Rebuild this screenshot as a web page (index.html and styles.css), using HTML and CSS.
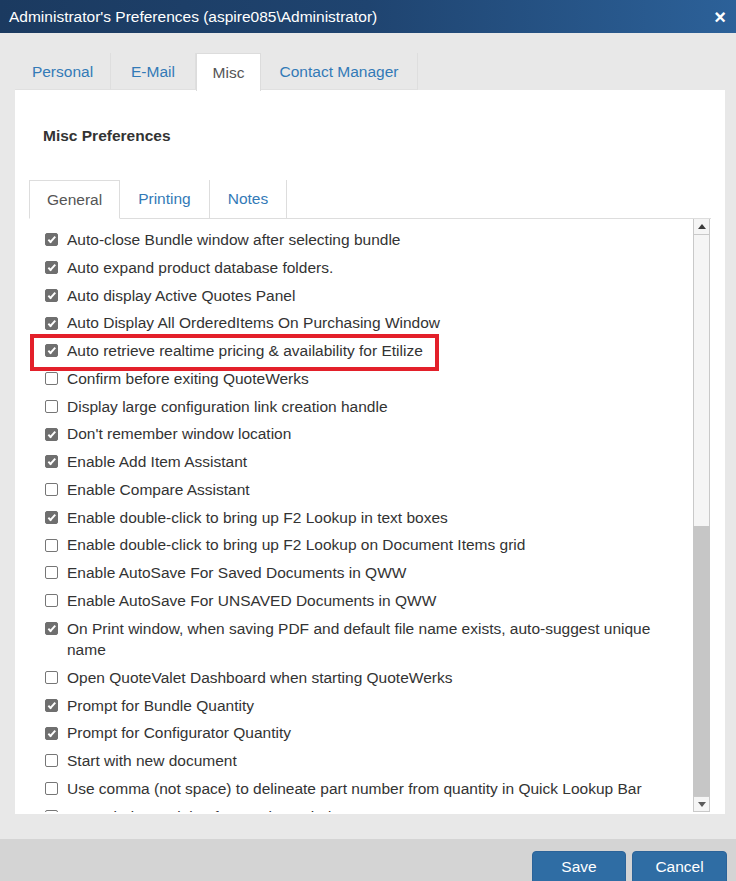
FILE: index.html
```html
<!DOCTYPE html>
<html>
<head>
<meta charset="utf-8">
<link rel="stylesheet" href="styles.css">
</head>
<body>
<div class="dialog">
  <div class="titlebar">
    <span class="title">Administrator's Preferences (aspire085\Administrator)</span>
    <span class="close">×</span>
  </div>
  <div class="body">
    <div class="tabs">
      <div class="tab t-personal">Personal</div>
      <div class="tab t-email">E-Mail</div>
      <div class="tab t-misc active">Misc</div>
      <div class="tab t-contact">Contact Manager</div>
    </div>
    <div class="panel">
      <div class="heading">Misc Preferences</div>
      <div class="subtabs">
        <div class="subtab active">General</div>
        <div class="subtab">Printing</div>
        <div class="subtab">Notes</div>
        <div class="subtab-fill"></div>
      </div>
      <div class="listwrap">
        <div class="items">
          <div class="row"><span class="cb on"></span><span class="lbl">Auto-close Bundle window after selecting bundle</span></div>
          <div class="row"><span class="cb on"></span><span class="lbl">Auto expand product database folders.</span></div>
          <div class="row"><span class="cb on"></span><span class="lbl">Auto display Active Quotes Panel</span></div>
          <div class="row"><span class="cb on"></span><span class="lbl">Auto Display All OrderedItems On Purchasing Window</span></div>
          <div class="row highlight"><span class="cb on"></span><span class="lbl">Auto retrieve realtime pricing &amp; availability for Etilize</span></div>
          <div class="row"><span class="cb"></span><span class="lbl">Confirm before exiting QuoteWerks</span></div>
          <div class="row"><span class="cb"></span><span class="lbl">Display large configuration link creation handle</span></div>
          <div class="row"><span class="cb on"></span><span class="lbl">Don't remember window location</span></div>
          <div class="row"><span class="cb on"></span><span class="lbl">Enable Add Item Assistant</span></div>
          <div class="row"><span class="cb"></span><span class="lbl">Enable Compare Assistant</span></div>
          <div class="row"><span class="cb on"></span><span class="lbl">Enable double-click to bring up F2 Lookup in text boxes</span></div>
          <div class="row"><span class="cb"></span><span class="lbl">Enable double-click to bring up F2 Lookup on Document Items grid</span></div>
          <div class="row"><span class="cb"></span><span class="lbl">Enable AutoSave For Saved Documents in QWW</span></div>
          <div class="row"><span class="cb"></span><span class="lbl">Enable AutoSave For UNSAVED Documents in QWW</span></div>
          <div class="row"><span class="cb on"></span><span class="lbl">On Print window, when saving PDF and default file name exists, auto-suggest unique name</span></div>
          <div class="row"><span class="cb"></span><span class="lbl">Open QuoteValet Dashboard when starting QuoteWerks</span></div>
          <div class="row"><span class="cb on"></span><span class="lbl">Prompt for Bundle Quantity</span></div>
          <div class="row"><span class="cb on"></span><span class="lbl">Prompt for Configurator Quantity</span></div>
          <div class="row"><span class="cb"></span><span class="lbl">Start with new document</span></div>
          <div class="row"><span class="cb"></span><span class="lbl">Use comma (not space) to delineate part number from quantity in Quick Lookup Bar</span></div>
          <div class="row"><span class="cb"></span><span class="lbl">Use Windows Dialog for Preview Window Save As PDF</span></div>
        </div>
        <div class="scrollbar">
          <div class="sb-btn"><span class="arrow up"></span></div>
          <div class="sb-track"></div>
          <div class="sb-thumb"></div>
          <div class="sb-btn down"><span class="arrow dn"></span></div>
        </div>
      </div>
    </div>
  </div>
  <div class="footer">
    <button class="btn">Save</button>
    <button class="btn">Cancel</button>
  </div>
</div>
</body>
</html>
```

FILE: styles.css
```css
*, *::before, *::after { box-sizing: border-box; }
html, body { margin: 0; padding: 0; }
body {
  font-family: "Liberation Sans", Arial, sans-serif;
  font-size: 15.5px;
  color: #333;
  background: #e8e8e8;
}
.dialog {
  width: 736px;
  height: 881px;
  display: flex;
  flex-direction: column;
  overflow: hidden;
}
.titlebar {
  height: 33px;
  flex: none;
  display: flex;
  align-items: center;
  justify-content: space-between;
  padding: 0 10px 0 9px;
  background: linear-gradient(to right, #1b3a60 0%, #1f4470 50%, #2c6199 100%);
  color: #fff;
}
.title { font-size: 15.5px; line-height: 20px; }
.close { font-weight: bold; font-size: 20px; line-height: 20px; }
.body {
  flex: 1;
  background: #e8e8e8;
  padding: 20px 11px 0 15px;
}
.tabs {
  display: flex;
  height: 37px;
}
.tab {
  height: 37px;
  line-height: 37px;
  text-align: center;
  color: #337ab7;
  border-right: 1px solid #dedede;
  border-bottom: 1px solid #e0e0e0;
}
.t-personal { width: 96px; }
.t-email { width: 85px; }
.t-misc { width: 65px; }
.t-contact { width: 157px; }
.tab.active {
  background: #fff;
  color: #555;
  border: 1px solid #dcdcdc;
  border-bottom: none;
  height: 38px;
}
.panel {
  background: #fff;
  height: 724px;
  padding: 35px 14px 2px 14px;
  display: flex;
  flex-direction: column;
}
.heading {
  font-weight: bold;
  line-height: 22px;
  padding-left: 14px;
  margin-bottom: 33px;
}
.subtabs {
  display: flex;
  height: 39px;
  flex: none;
}
.subtab {
  height: 39px;
  line-height: 38px;
  padding: 0 18px;
  color: #337ab7;
  border-right: 1px solid #dddddd;
  border-bottom: 1px solid #dddddd;
}
.subtab.active {
  color: #555;
  border: 1px solid #dddddd;
  border-bottom-color: #fff;
  padding: 0 17px;
}
.subtab-fill {
  flex: 1;
  border-bottom: 1px solid #dddddd;
}
.listwrap {
  flex: 1;
  display: flex;
  min-height: 0;
  padding-right: 1px;
}
.items {
  flex: 1;
  overflow: hidden;
  padding: 10px 14px 0 16px;
}
.row {
  display: flex;
  align-items: flex-start;
  gap: 9px;
  line-height: 21.5px;
  margin-bottom: 6.25px;
  position: relative;
}
.cb {
  flex: none;
  width: 13px;
  height: 13px;
  margin-top: 4.25px;
  border: 1px solid #767676;
  border-radius: 2px;
  background: #fff;
  position: relative;
}
.cb.on {
  background: #6f6f6f;
  border-color: #6f6f6f;
}
.cb.on::after {
  content: "";
  position: absolute;
  left: 3.5px;
  top: 1px;
  width: 4px;
  height: 7.5px;
  border: solid #fff;
  border-width: 0 2px 2px 0;
  transform: rotate(42deg);
}
.row.highlight::after {
  content: "";
  position: absolute;
  left: -15px;
  top: -6px;
  width: 409px;
  height: 37px;
  border: 4px solid #e3202a;
}
.scrollbar {
  width: 17px;
  flex: none;
  display: flex;
  flex-direction: column;
}
.sb-btn {
  height: 16px;
  flex: none;
  background: #f5f5f5;
  border: 1px solid #c9c9c9;
  border-top: none;
  display: flex;
  align-items: center;
  justify-content: center;
}
.sb-btn.down { border-top: 1px solid #c9c9c9; border-bottom: 1px solid #c9c9c9; }
.sb-track {
  height: 291px;
  flex: none;
  background: #f5f5f5;
  border-left: 1px solid #c9c9c9;
  border-right: 1px solid #c9c9c9;
}
.sb-thumb {
  flex: 1;
  background: #c6c6c6;
}
.arrow {
  width: 0;
  height: 0;
  border-left: 4.5px solid transparent;
  border-right: 4.5px solid transparent;
}
.arrow.up { border-bottom: 5px solid #3c3c3c; }
.arrow.dn { border-top: 5px solid #5a5a5a; }
.footer {
  height: 42px;
  flex: none;
  background: #d4d4d4;
  display: flex;
  justify-content: flex-end;
  align-items: flex-start;
  gap: 6px;
  padding: 12px 9px 0 0;
}
.btn {
  font-family: "Liberation Sans", Arial, sans-serif;
  font-size: 15.5px;
  color: #fff;
  background: #2f6da4;
  border: 1px solid #2b6399;
  border-radius: 4px 4px 0 0;
  height: 34px;
  width: 94px;
  padding: 0 0 3px;
  line-height: 28px;
}
.btn + .btn { width: 95px; }
```
